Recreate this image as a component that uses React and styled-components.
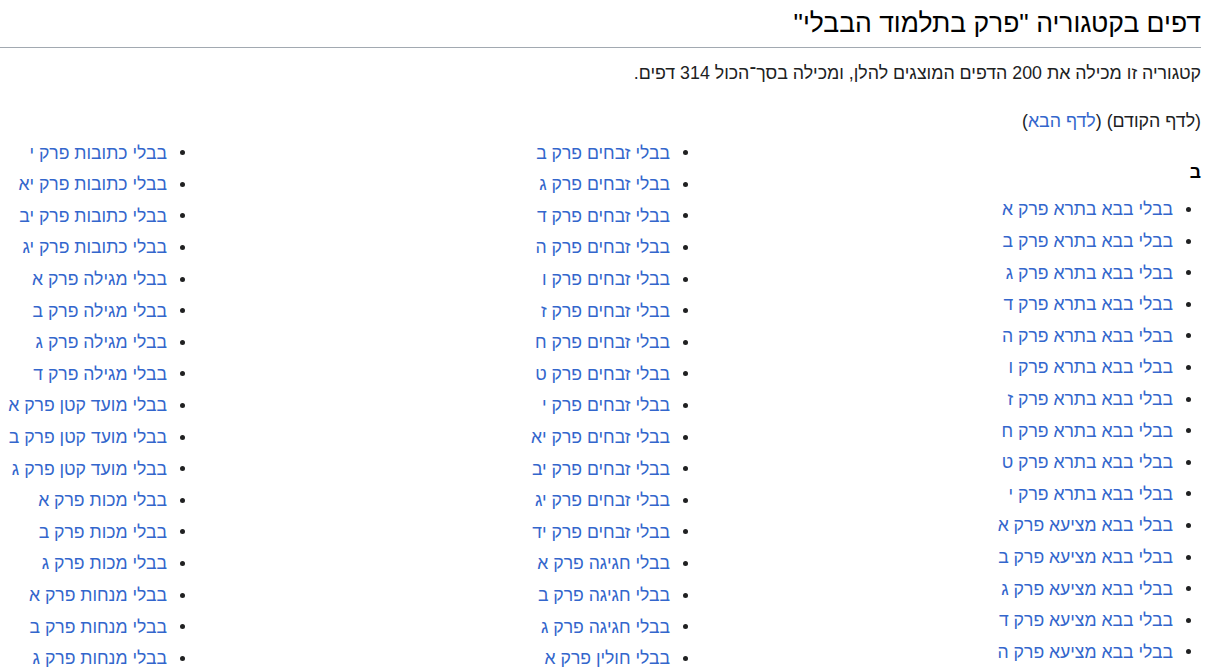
import React from "react";
import styled, { createGlobalStyle } from "styled-components";

const GlobalStyle = createGlobalStyle`
  html, body {
    margin: 0;
    padding: 0;
    background: #ffffff;
    overflow: hidden;
  }
  body {
    direction: rtl;
    font-family: "Liberation Sans", Arial, sans-serif;
    color: #202122;
  }
`;

const Page = styled.div`
  padding-right: 8px;
`;

const Title = styled.h1`
  margin: 0;
  padding: 6px 0 6px;
  font-size: 26.5px;
  font-weight: normal;
  line-height: 35px;
  color: #000;
  border-bottom: 1px solid #a2a9b1;
`;

const Para = styled.p`
  margin: ${(p) => p.$mt}px 0 0;
  font-size: 17.8px;
  line-height: 28.8px;
`;

const Link = styled.a`
  color: #3366cc;
  text-decoration: none;
`;

const Columns = styled.div`
  margin-top: 3px;
  display: grid;
  grid-template-columns: repeat(3, 503px);
  align-items: start;
`;

const Column = styled.div`
  font-size: 17.6px;
`;

const Letter = styled.h3`
  margin: 19px 0 9px;
  font-size: 17.6px;
  font-weight: bold;
  line-height: 28.8px;
  color: #000;
`;

const List = styled.ul`
  list-style: none;
  margin: 0;
  padding: 0 10px 0 0;
`;

const Item = styled.li`
  display: flex;
  align-items: center;
  gap: 13px;
  line-height: 28.2px;
  margin-bottom: 3.4px;
`;

const Dot = styled.span`
  flex: none;
  width: 5px;
  height: 5px;
  border-radius: 50%;
  background: #202122;
`;

const right = [
  ...["א", "ב", "ג", "ד", "ה", "ו", "ז", "ח", "ט", "י"].map((l) => `בבלי בבא בתרא פרק ${l}`),
  ...["א", "ב", "ג", "ד", "ה"].map((l) => `בבלי בבא מציעא פרק ${l}`),
];

const middle = [
  ...["ב", "ג", "ד", "ה", "ו", "ז", "ח", "ט", "י", "יא", "יב", "יג", "יד"].map((l) => `בבלי זבחים פרק ${l}`),
  ...["א", "ב", "ג"].map((l) => `בבלי חגיגה פרק ${l}`),
  ...["א"].map((l) => `בבלי חולין פרק ${l}`),
];

const left = [
  ...["י", "יא", "יב", "יג"].map((l) => `בבלי כתובות פרק ${l}`),
  ...["א", "ב", "ג", "ד"].map((l) => `בבלי מגילה פרק ${l}`),
  ...["א", "ב", "ג"].map((l) => `בבלי מועד קטן פרק ${l}`),
  ...["א", "ב", "ג"].map((l) => `בבלי מכות פרק ${l}`),
  ...["א", "ב", "ג"].map((l) => `בבלי מנחות פרק ${l}`),
];

function PageList({ items }) {
  return (
    <List>
      {items.map((t) => (
        <Item key={t}>
          <Dot />
          <Link href="#">{t}</Link>
        </Item>
      ))}
    </List>
  );
}

export default function App() {
  return (
    <>
      <GlobalStyle />
      <Page>
        <Title>דפים בקטגוריה "פרק בתלמוד הבבלי"</Title>
        <Para $mt={11}>
          קטגוריה זו מכילה את 200 הדפים המוצגים להלן, ומכילה בסך־הכול 314 דפים.
        </Para>
        <Para $mt={19}>
          (לדף הקודם) (<Link href="#">לדף הבא</Link>)
        </Para>
        <Columns>
          <Column>
            <Letter>ב</Letter>
            <PageList items={right} />
          </Column>
          <Column>
            <PageList items={middle} />
          </Column>
          <Column>
            <PageList items={left} />
          </Column>
        </Columns>
      </Page>
    </>
  );
}
